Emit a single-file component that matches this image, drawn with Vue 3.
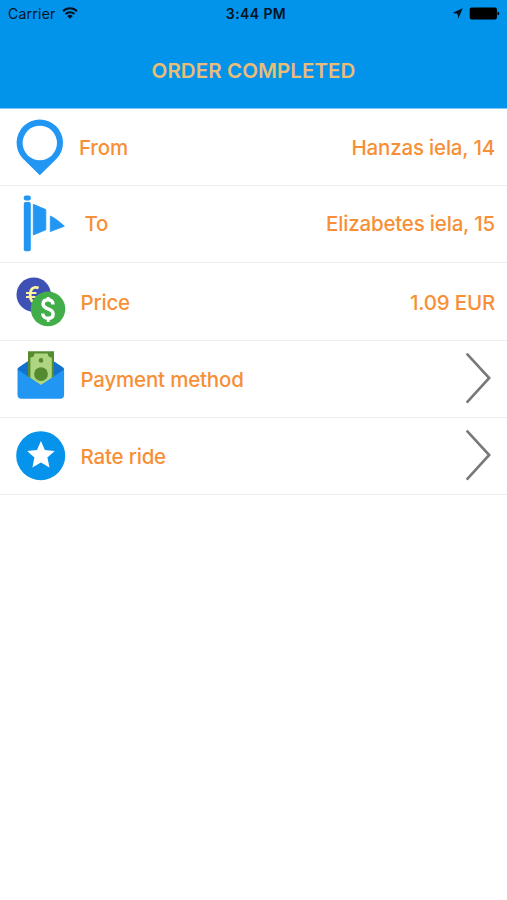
<script setup>
const rows = [
  { id: 'from', label: 'From', value: 'Hanzas iela, 14', box: '14 109 54 76' },
  { id: 'to', label: 'To', value: 'Elizabetes iela, 15', box: '14 186 54 76' },
  { id: 'price', label: 'Price', value: '1.09 EUR', box: '14 263 54 76' },
  { id: 'payment', label: 'Payment method', box: '14 341 54 76' },
  { id: 'rate', label: 'Rate ride', box: '14 418 54 76' },
]
</script>

<template>
  <main class="screen">
    <header class="top">
      <div class="status">
        <div class="left">
          <span class="carrier">Carrier</span>
          <svg class="wifi" width="16" height="12" viewBox="0 0 16 12" fill="none" stroke="#03131f" stroke-width="2">
            <path d="M1.1 4.2a9.8 9.8 0 0 1 13.8 0M3.6 7a6.2 6.2 0 0 1 8.8 0" />
            <path d="M8 11.8 5.4 9.2a3.6 3.6 0 0 1 5.2 0z" fill="#03131f" stroke="none" />
          </svg>
        </div>
        <span class="time">3:44 PM</span>
        <div class="right">
          <svg width="11" height="11" viewBox="0 0 11 11"><path d="M10.7.3 6.3 10.7 5.6 5.7.3 5z" fill="#03131f" /></svg>
          <svg width="31" height="13" viewBox="0 0 31 13" fill="#000">
            <rect x="0.7" y="0.5" width="27.2" height="12" rx="1.8" />
            <path d="M28.5 4.6q1.8.6 1.8 2t-1.8 2z" />
          </svg>
        </div>
      </div>
      <h1>ORDER COMPLETED</h1>
    </header>
    <section class="list">
      <div v-for="row in rows" :key="row.id" class="row" :class="row.id">
        <svg class="icon" width="54" height="76" :viewBox="row.box">
          <template v-if="row.id === 'from'">
            <path d="M39.8 175.3 22.8 158.5A23.2 23.2 0 1 1 56.8 158.5z" fill="#2196f3" />
            <circle cx="39.8" cy="143" r="17.2" fill="#fff" />
          </template>
          <template v-else-if="row.id === 'to'">
            <g fill="#2196f3">
              <rect x="23.8" y="195.4" width="7" height="5" rx="2" />
              <rect x="23.8" y="202" width="7" height="49.2" rx="1.8" />
              <path d="M33.3 204.3 45.8 209.6V229.8L33.3 235z" stroke="#2196f3" stroke-width=".8" stroke-linejoin="round" />
              <path d="M50.3 216Q56 218.5 64.4 226.2L50.3 231.6z" stroke="#2196f3" stroke-width=".8" stroke-linejoin="round" />
            </g>
          </template>
          <template v-else-if="row.id === 'price'">
            <circle cx="33.7" cy="294.7" r="17.2" fill="#3f51b5" />
            <path d="M38.6 288q-2.2-1-4.2-.5-4.2 1-4.2 7.5t4.2 7.3q2 .3 4.2-.6" fill="none" stroke="#fff59d" stroke-width="2.8" />
            <path d="M26 293h10.4M26 297h9.6" stroke="#fff59d" stroke-width="1.9" />
            <circle cx="48" cy="308.9" r="17.3" fill="#43ae49" />
            <path d="M52.9 304.6c0-3.2-1.8-4.8-4.9-4.8s-4.9 1.8-4.9 4.3c0 3 2.4 3.9 4.9 4.8 2.8 1 5.1 1.9 5.1 4.8s-2 4.6-5.1 4.6-5.2-1.8-5.2-4.9" fill="none" stroke="#fff" stroke-width="3.5" />
            <path d="M48.2 297v3M48.2 318v4" stroke="#fff" stroke-width="2.8" />
          </template>
          <template v-else-if="row.id === 'payment'">
            <path d="M17.5 369.6q0-1.5 1.3-2.3L40.8 352.5 62.8 367.3q1.3.8 1.3 2.3L61 377 41 387 20 377z" fill="#1273cd" />
            <path d="M28 351.2H54V378L41 385.7 28 378z" fill="#558b2f" />
            <path d="M34.4 353.4H47.8A4 4 0 0 0 51.8 357.4V378L41 385.5 30.4 378V357.4A4 4 0 0 0 34.4 353.4z" fill="#aed581" />
            <path d="M17.5 369.5 41 385 64.1 369.5V394.8a4 4 0 0 1-4 4H21.5a4 4 0 0 1-4-4z" fill="#2196f3" />
            <circle cx="41" cy="360.4" r="2.3" fill="#558b2f" />
            <circle cx="41" cy="374.1" r="6.9" fill="#558b2f" />
          </template>
          <template v-else>
            <circle cx="40.7" cy="455.7" r="24.5" fill="#0693eb" />
            <path d="m40.9 441 4 9 9.8 1-7.3 6.6 2.1 9.8-8.6-5-8.5 5 2-9.8-7.3-6.6 9.9-1z" fill="#fff" />
          </template>
        </svg>
        <span class="label">{{ row.label }}</span>
        <span v-if="row.value" class="value">{{ row.value }}</span>
        <svg v-else class="chevron" width="27" height="52" viewBox="0 0 27 52">
          <path d="M2.4 1.4 24.2 25 2.4 48.8" fill="none" stroke="#787878" stroke-width="2.6" stroke-linecap="round" />
        </svg>
      </div>
    </section>
  </main>
</template>

<style>
body { margin: 0; background: #fff; }
</style>

<style scoped>
.screen {
  width: 507px;
  min-height: 900px;
  background: #fff;
  font-family: Inter, "Liberation Sans", sans-serif;
}
.top {
  box-sizing: border-box;
  height: 109px;
  background: #0293eb;
  border-bottom: 1px solid #82c9f5;
}
.status {
  display: grid;
  grid-template-columns: 1fr auto 1fr;
  align-items: center;
  height: 27px;
  padding: 0 7px 0 8px;
  color: #03131f;
  font-size: 14px;
}
.left, .right { display: flex; align-items: center; }
.left { gap: 6px; }
.carrier { letter-spacing: 0.25px; }
.wifi { margin-top: -2px; }
.right { justify-content: flex-end; gap: 6px; }
.time { font-weight: 600; letter-spacing: 0.4px; padding-left: 4px; }
h1 {
  margin: 0;
  padding-top: 29px;
  line-height: 30px;
  text-align: center;
  font-size: 20.5px;
  font-weight: 600;
  letter-spacing: 0.08px;
  color: #e9bd78;
}
.row {
  box-sizing: border-box;
  display: flex;
  align-items: center;
  height: 77px;
  padding: 0 12px 0 14px;
  border-bottom: 1px solid #ededed;
  color: #f78f37;
  font-size: 20.5px;
  font-weight: 450;
  letter-spacing: -0.19px;
  line-height: 30px;
}
.price { height: 78px; }
.icon { flex: none; align-self: flex-start; }
.label { margin-left: 11px; padding-top: 2px; }
.to .label { margin-left: 16.5px; padding-top: 0; }
.price .label, .payment .label, .rate .label { margin-left: 12.5px; }
.value { margin-left: auto; padding-top: 2px; }
.to .value { padding-top: 0; }
.chevron { margin-left: auto; margin-right: 3px; }
</style>
